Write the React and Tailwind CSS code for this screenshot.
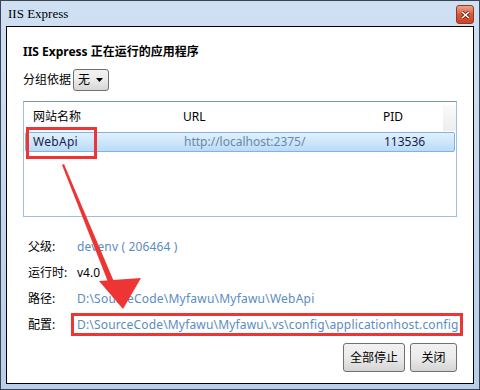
import React from "react";

const F = { fontFamily: '"Noto Sans", "Noto Sans CJK SC", sans-serif' };

export default function App() {
  return (
    <div className="relative w-[480px] h-[390px] bg-[#3c4450] p-px" style={F}>
      <div className="flex flex-col w-full h-full bg-gradient-to-b from-[#cfe0f3] via-[#c3d8ef] to-[#b7cfea]">
        {/* title bar */}
        <div className="flex items-start h-[25px] pl-[7px] pr-[5px]">
          <span className="mt-[5px] leading-[16px] text-black" style={{ fontFamily: '"Liberation Serif", serif', fontSize: 13 }}>IIS Express</span>
          <div className="ml-auto mt-[4px] w-[18px] h-[19px] rounded-[3px] border border-[#8a3b2a] bg-gradient-to-b from-[#eca48c] via-[#dc5634] to-[#cc4326] flex items-center justify-center">
            <svg width="9" height="8" viewBox="0 0 9 8">
              <path d="M1 1 L8 7 M8 1 L1 7" stroke="#5a2318" strokeWidth="3" />
              <path d="M1 1 L8 7 M8 1 L1 7" stroke="#fff" strokeWidth="1.6" />
            </svg>
          </div>
        </div>
        {/* content */}
        <div className="flex-1 mx-[5px] mb-[5px] border border-black bg-white flex flex-col pl-[16px] pr-[16px] pt-[17px] text-[12px] text-black">
          <div className="h-[16px] leading-[16px] font-bold">
            IIS Express <span className="font-bold">正在运行的应用程序</span>
          </div>
          <div className="flex items-center mt-[9px] h-[22px]">
            <span className="leading-[16px]">分组依据</span>
            <div className="ml-[2px] w-[36px] h-[22px] rounded-[3px] border border-[#707070] bg-gradient-to-b from-[#f2f2f2] via-[#ebebeb] to-[#d6d6d6] flex items-center pl-[4px] pr-[5px]">
              <span className="leading-[16px]">无</span>
              <svg className="ml-auto" width="7" height="4" viewBox="0 0 7 4"><path d="M0 0 H7 L3.5 4 Z" fill="#000" /></svg>
            </div>
          </div>
          {/* list box */}
          <div className="mt-[10px] w-[434px] h-[116px] border border-[#9fbfdf] border-t-[#7393b8] flex flex-col">
            <div className="flex h-[29px] items-center relative">
              <span className="pl-[9px] w-[159px]">网站名称</span>
              <span className="w-[200px]">URL</span>
              <span>PID</span>
              <div className="absolute right-0 top-[3px] w-[13px] h-[26px] bg-gradient-to-b from-[#fafafa] to-[#eeeeee]" />
            </div>
            <div className="mx-px mt-px h-[20px] rounded-[2px] border border-[#84b2e4] bg-gradient-to-b from-[#e2f1fd] to-[#b9dcf7] flex items-center">
              <span className="pl-[7px] w-[158px] text-[#1b1b4f] tracking-[0.3px]">WebApi</span>
              <span className="w-[200px] text-[#6a88ab]">http://localhost:2375/</span>
              <span className="text-[#1b1b4f]">113536</span>
            </div>
          </div>
          {/* details */}
          <div className="mt-[17px] flex flex-col">
            <div className="flex items-center h-[26px]">
              <span className="pl-[5px] w-[54px] shrink-0">父级:</span>
              <span className="text-[#5b8cc2] tracking-[0.15px]">devenv ( 206464 )</span>
            </div>
            <div className="flex items-center h-[26px]">
              <span className="pl-[5px] w-[54px] shrink-0">运行时:</span>
              <span>v4.0</span>
            </div>
            <div className="flex items-center h-[26px]">
              <span className="pl-[5px] w-[54px] shrink-0">路径:</span>
              <span className="text-[#5b8cc2] tracking-[0.22px]">D:\SourceCode\Myfawu\Myfawu\WebApi</span>
            </div>
            <div className="flex items-center h-[26px]">
              <span className="pl-[5px] w-[48px] shrink-0">配置:</span>
              <span className="shrink-0 w-[392px] h-[23px] mt-[-1px] border-[3px] border-[#ee3535] pl-[3px] flex items-center text-[#5b8cc2] whitespace-nowrap tracking-[0.17px]">D:\SourceCode\Myfawu\Myfawu\.vs\config\applicationhost.config</span>
            </div>
          </div>
          <div className="mt-[5px] w-[434px] flex justify-end gap-[5px]">
            <button className="w-[62px] h-[29px] rounded-[3px] border border-[#707070] bg-gradient-to-b from-[#f2f2f2] via-[#ebebeb] to-[#d4d4d4]">全部停止</button>
            <button className="w-[47px] h-[29px] rounded-[3px] border border-[#707070] bg-gradient-to-b from-[#f2f2f2] via-[#ebebeb] to-[#d4d4d4]">关闭</button>
          </div>
        </div>
      </div>
      {/* annotations */}
      <div className="absolute left-[26px] top-[127px] w-[71px] h-[32px] border-[3px] border-[#ee3535]" />
      <svg className="absolute left-0 top-0 pointer-events-none" width="480" height="390">
        <polygon points="62,165 64,164 115,284 110,287" fill="#ee3535" />
        <polygon points="99,281 141,278 123,309" fill="#ee3535" />
      </svg>
    </div>
  );
}
